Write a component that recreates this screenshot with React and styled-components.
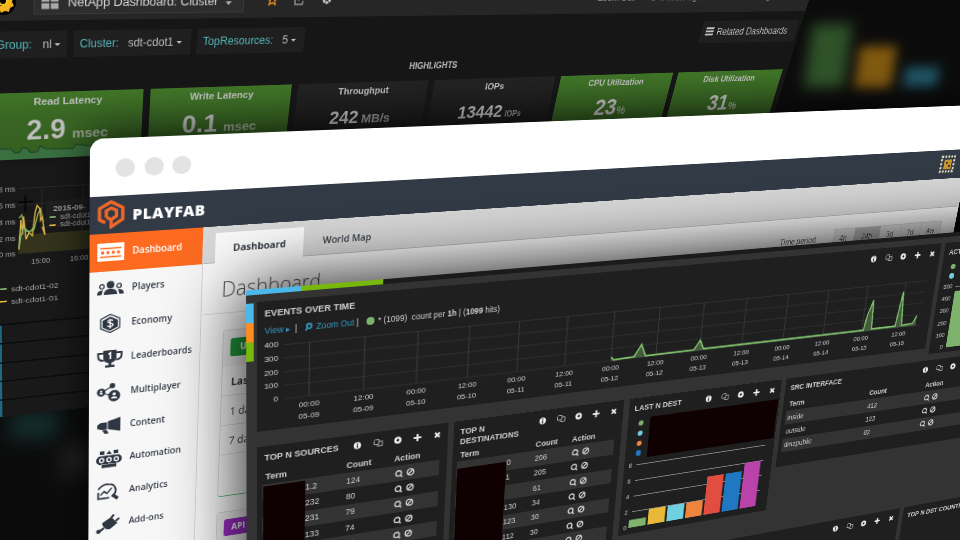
import React from "react";
import styled, { createGlobalStyle, css } from "styled-components";

/* Each window is a flat page hung in perspective: an origin on the desktop,
   the vanishing points of its rows and columns, and the foreshortening rate. */
const plane = ({ origin, rows, cols, a, b, dx, dy }) => css`
  transform-origin: 0 0;
  transform: matrix3d(
      ${rows[0] * a}, ${rows[1] * a}, 0, ${a},
      ${cols[0] * b}, ${cols[1] * b}, 0, ${b},
      0, 0, 1, 0,
      ${origin[0]}, ${origin[1]}, 0, 1
    )
    translate(${dx}px, ${dy}px);
`;

const Global = createGlobalStyle`
  * { box-sizing: border-box; }
  html, body { margin: 0; background: #0b0b0b; }
`;

const Desktop = styled.main`
  position: relative;
  width: 960px;
  height: 540px;
  overflow: hidden;
  background: #0b0b0b;
  font-family: "Liberation Sans", sans-serif;
`;

const Glow = styled.div`
  position: absolute;
  left: ${(p) => p.$x}px;
  top: ${(p) => p.$y}px;
  width: ${(p) => p.$w}px;
  height: ${(p) => p.$h}px;
  background: ${(p) => p.$c};
  filter: blur(${(p) => p.$blur || 6}px);
  transform: skewX(-8deg);
`;

/* ---------- metrics dashboard (back) ---------- */

const MetricsWindow = styled.section`
  position: absolute;
  left: 0;
  top: 0;
  width: 1048px;
  height: 522px;
  overflow: hidden;
  background: #161616;
  color: #bdbdbd;
  ${plane({ origin: [0, 0], rows: [3850, -26], cols: [20, 2560], a: 1 / 3850, b: 1 / 2560, dx: -21, dy: -24 })}
`;

const MetricsNav = styled.header`
  display: flex;
  align-items: center;
  height: 45px;
  padding: 6px 20px 0 11px;
  background: #262626;
  font-size: 13.6px;
`;

const DashPicker = styled.div`
  display: flex;
  align-items: center;
  gap: 9px;
  width: 227px;
  height: 27px;
  margin: 0 26px 0 18px;
  padding: 2px 0 0 7px;
  background: #2d2d2d;
  border: 1px solid #3a3a3a;
  color: #d2d2d2;
  letter-spacing: -0.15px;
  white-space: nowrap;
`;

const NavIcons = styled.div`
  display: flex;
  gap: 19px;
  flex: 1;
`;

const NavText = styled.span`
  display: flex;
  align-items: center;
  gap: 5px;
  margin-left: ${(p) => p.$gap || 0}px;
  font-size: 11.5px;
  color: #999;
  white-space: nowrap;
`;

const Variables = styled.div`
  display: flex;
  gap: 6.5px;
  height: 39px;
  padding: 10.5px 5px 0 10px;
`;

const Variable = styled.div`
  display: flex;
  align-items: center;
  justify-content: ${(p) => (p.$end ? "flex-end" : "flex-start")};
  gap: ${(p) => p.$gap || 10}px;
  width: ${(p) => p.$w}px;
  padding: 0 7px;
  margin-left: ${(p) => (p.$push ? "auto" : 0)};
  background: #1f1f1f;
  font-size: 12.2px;
  white-space: nowrap;
  b {
    font-weight: 400;
    color: #55b8bd;
  }
  i {
    display: inline-block;
    margin: 0 0 2px 3px;
    border: 3px solid transparent;
    border-top-color: #c3c3c3;
    border-bottom: 0;
  }
`;

const Highlights = styled.h2`
  margin: 0;
  height: 36.5px;
  line-height: 39px;
  font-size: 10.2px;
  text-align: center;
`;

const StatRow = styled.div`
  display: grid;
  grid-template-columns: repeat(6, 165px);
  gap: 8px;
  padding-left: 10px;
`;

const Stat = styled.div`
  display: flex;
  flex-direction: column;
  align-items: center;
  height: 74px;
  padding-top: 4px;
  background: ${(p) => (p.$green ? "linear-gradient(#3f7427, #386523 40%, #345f20)" : "linear-gradient(#222, #161616)")};
  font-weight: 700;
  overflow: hidden;
`;

const StatTitle = styled.div`
  font-size: 11.4px;
  line-height: 13px;
`;

const StatValue = styled.div`
  margin-top: 9px;
  height: 31px;
  line-height: 31px;
  font-size: ${(p) => p.$size}px;
  white-space: nowrap;
  small {
    margin-left: ${(p) => p.$space || 4}px;
    font-size: ${(p) => p.$unit}px;
    opacity: 0.75;
  }
`;

const GraphPanel = styled.div`
  display: grid;
  grid-template-columns: 26px 1fr;
  width: 400px;
  height: 195px;
  margin: 5px 0 0 10px;
  padding-top: 20px;
  background: #181818;
  color: #a4a4a4;
  font-size: 8.5px;
`;

const Axis = styled.div`
  display: flex;
  flex-direction: column;
  text-align: right;
  line-height: 19.7px;
`;

const Plot = styled.div`
  position: relative;
  padding: 8px 0 0 3px;
  svg {
    display: block;
  }
`;

const Hours = styled.div`
  display: flex;
  gap: 23px;
  padding: 1px 0 0 15px;
`;

const Legend = styled.div`
  display: flex;
  flex-direction: column;
  gap: 5px;
  margin: 22px 0 0 -27px;
  font-size: 9.8px;
`;

const Series = styled.div`
  display: flex;
  align-items: center;
  gap: 5px;
  white-space: nowrap;
  &::before {
    content: "";
    width: ${(p) => p.$dash || 14}px;
    height: 2px;
    background: ${(p) => p.$c};
  }
`;

const Tooltip = styled.div`
  position: absolute;
  left: 34px;
  top: 25px;
  width: 110px;
  height: 33px;
  padding: 4px 0 0 4px;
  background: rgba(32, 32, 32, 0.85);
  line-height: 9.8px;
  b {
    display: block;
    padding-left: 4px;
    font-size: 9.2px;
    line-height: 12px;
  }
`;

const DarkRow = styled.div`
  width: 400px;
  height: 25.6px;
  margin-left: 10px;
  border-top: 2px solid #0b0b0b;
  border-left: 10px solid #1f6a80;
  background: #191919;
`;

function Metrics() {
  return (
    <MetricsWindow>
      <MetricsNav>
        <svg width="26" height="26" viewBox="0 0 26 26">
          <circle cx="13" cy="13" r="13" fill="#000" />
          <path d="M4 16l2 5 3-1 2 4 4-2 4 1 1-4 4-2-2-4 1-4-3-1-3 2-2 6-5 1-4-3z" fill="#f2b51d" />
          <circle cx="13" cy="12" r="4" fill="none" stroke="#f2c51d" strokeWidth="2" />
        </svg>
        <DashPicker>
          <svg width="18" height="14" viewBox="0 0 18 14" fill="#aaa">
            <path d="M0 0h8v6H0zM9.500 0h8v6h-8zM0 7.500h8v6H0zM9.500 7.500h8v6h-8z" />
          </svg>
          NetApp Dashboard: Cluster
          <svg width="7" height="14" viewBox="0 0 7 14" fill="#aaa"><path d="M0 7h7l-3.500 4z" /></svg>
        </DashPicker>
        <NavIcons>
          <svg width="13" height="13" viewBox="0 0 13 13"><path d="M6.500 1l1.600 3.700 4 .4-3 2.700.9 4-3.500-2-3.500 2 .9-4-3-2.700 4-.4z" fill="none" stroke="#e08a1d" strokeWidth="1.600" /></svg>
          <svg width="13" height="13" viewBox="0 0 13 13" fill="none" stroke="#999" strokeWidth="1.400"><path d="M6 3H1v9h9V8M5 8c0-4 3-5 7-5" /></svg>
          <svg width="13" height="13" viewBox="0 0 13 13"><circle cx="6.500" cy="6.500" r="3.700" fill="none" stroke="#ccc" strokeWidth="3" strokeDasharray="3 0.8" /></svg>
        </NavIcons>
        <NavText>Zoom Out</NavText>
        <NavText $gap={24}>
          <svg width="9" height="9" viewBox="0 0 9 9"><circle cx="4.500" cy="4.500" r="4.200" fill="#bbb" /></svg>
          6 hours ago to a few seconds ago
        </NavText>
        <NavText $gap={26}>
          <svg width="10" height="10" viewBox="0 0 10 10"><circle cx="5" cy="5" r="3.600" fill="none" stroke="#aaa" strokeWidth="1.600" /></svg>
        </NavText>
      </MetricsNav>
      <Variables>
        <Variable $w={80} $end $gap={11}><b>Group:</b><span>nl<i /></span></Variable>
        <Variable $w={128.5}><b>Cluster:</b><span>sdt-cdot1<i /></span></Variable>
        <Variable $w={125} $gap={11}><b>TopResources:</b><span>5<i /></span></Variable>
        <Variable $w={150} $push $gap={5}>
          <svg width="12" height="11" viewBox="0 0 12 11" fill="#c3c3c3"><path d="M0 0h12v2.300H0zM0 4h12v2.300H0zM0 8h12v2.300H0z" /></svg>
          Related Dashboards
        </Variable>
      </Variables>
      <Highlights>HIGHLIGHTS</Highlights>
      <StatRow>
        <Stat $green>
          <StatTitle>Read Latency</StatTitle>
          <StatValue $size={30.5} $unit={15.5} $space={7}>2.9<small>msec</small></StatValue>
          <svg width="165" height="18" viewBox="0 0 165 18">
            <path d="M0 4l18 1 4 5h5l4-6 5 1 4 5h8l3-7 8 4 30 1 4-5 20 3 52-1v13H0z" fill="#3a7040" />
            <path d="M0 4l18 1 4 5h5l4-6 5 1 4 5h8l3-7 8 4 30 1 4-5 20 3 52-1" fill="none" stroke="#1f4a28" strokeWidth="1.500" />
          </svg>
        </Stat>
        <Stat $green><StatTitle>Write Latency</StatTitle><StatValue $size={30} $unit={15.5} $space={7}>0.1<small>msec</small></StatValue></Stat>
        <Stat><StatTitle>Throughput</StatTitle><StatValue $size={22} $unit={15.500}>242<small>MB/s</small></StatValue></Stat>
        <Stat><StatTitle>IOPs</StatTitle><StatValue $size={22} $unit={10} $space={4}>13442<small>IOPs</small></StatValue></Stat>
        <Stat $green><StatTitle>CPU Utilization</StatTitle><StatValue $size={29.5} $unit={15} $space={1}>23<small>%</small></StatValue></Stat>
        <Stat $green><StatTitle>Disk Utilization</StatTitle><StatValue $size={29.5} $unit={15} $space={1}>31<small>%</small></StatValue></Stat>
      </StatRow>
      <GraphPanel>
        <Axis><span>8 ms</span><span>6 ms</span><span>4 ms</span><span>2 ms</span><span>0 ms</span></Axis>
        <Plot>
          <svg width="360" height="84" viewBox="0 0 360 84">
            <path d="M0 .5h360M0 20h360M0 40h360M0 60h360M0 79h360M26 0v79M72 0v79" stroke="#2b2b2b" fill="none" />
            <path d="M0 56h90v23H0z" fill="#34331b" />
            <path d="M1 36l3-4 3 16 5 5 6-3 4-18 3-6 3 16" fill="none" stroke="#88a04b" strokeWidth="1.500" />
            <path d="M1 74l2-36 2 18 1-22 3 28 3-8 4 4 3-28 2-8 3 4 1 14 2-4 3 22-3-10" fill="none" stroke="#d8b54a" strokeWidth="1.500" />
            <path d="M1 72l2-14 3-10 3 4 5 1 3-5" fill="none" stroke="#7eb26d" strokeWidth="1.500" />
            <path d="M8 9v20M0 17h17" stroke="#000" strokeWidth="1.500" />
          </svg>
          <Tooltip>
            <b>2015-09-</b>
            <Series $c="#7eb26d" $dash={7}>sdt-cdot1-02</Series>
            <Series $c="#eab839" $dash={7}>sdt-cdot1-01</Series>
          </Tooltip>
          <Hours><span>15:00</span><span>16:00</span></Hours>
          <Legend><Series $c="#7eb26d">sdt-cdot1-02</Series><Series $c="#eab839">sdt-cdot1-01</Series></Legend>
        </Plot>
      </GraphPanel>
      {[0, 1, 2, 3, 4].map((n) => <DarkRow key={n} />)}
    </MetricsWindow>
  );
}

/* ---------- game back office (middle) ---------- */

const OfficeWindow = styled.section`
  position: absolute;
  left: 0;
  top: 0;
  width: 1190px;
  height: 620px;
  overflow: visible;
  border-radius: 14px 14px 0 0;
  background: #fafafa;
  box-shadow: 0 0 44px rgba(0, 0, 0, 0.85);
  color: #343a42;
  font-family: "Open Sans", sans-serif;
  ${plane({ origin: [90, 139], rows: [3607, 4], cols: [72, 4600], a: 1 / 3517, b: 1 / 4461, dx: 0, dy: 0 })}
`;

const TitleBar = styled.div`
  display: flex;
  align-items: center;
  gap: 9.5px;
  height: 58.5px;
  padding: 3px 0 0 26px;
  border-radius: 14px 14px 0 0;
  background: #fff;
`;

const Light = styled.span`
  width: 20px;
  height: 19px;
  border-radius: 50%;
  background: #e3e3e3;
`;

const OfficeNav = styled.header`
  display: flex;
  align-items: center;
  gap: 7px;
  height: 39.5px;
  padding: 0 23px 0 7px;
  background: #313a45;
  color: #fff;
  font-size: 16.5px;
  font-weight: 800;
  letter-spacing: 0.4px;
  svg:last-child {
    margin-left: auto;
  }
`;

const OfficeBody = styled.div`
  display: grid;
  grid-template-columns: 121px 1fr;
  height: 522px;
`;

const Sidebar = styled.nav`
  background: #f7f7f7;
  border-right: 1px solid #d6d6d6;
`;

const SideItem = styled.div`
  display: grid;
  grid-template-columns: 30px 1fr;
  align-items: center;
  gap: 7.5px;
  height: ${(p) => (p.$active ? 39.5 : 38.3)}px;
  padding-left: 7px;
  background: ${(p) => (p.$active ? "#fd6a20" : "transparent")};
  color: ${(p) => (p.$active ? "#fff" : "#333a44")};
  font-size: 10px;
  font-weight: 600;
  span {
    padding-bottom: 1.500px;
  }
`;

const Tabs = styled.div`
  display: flex;
  align-items: flex-end;
  height: 39.5px;
  padding-left: 13px;
  background: #d8d8d8;
  border-bottom: 1px solid #bbb;
  font-size: 11px;
  font-weight: 600;
`;

const Tab = styled.div`
  display: flex;
  align-items: center;
  justify-content: center;
  width: ${(p) => (p.$active ? 99.5 : 104)}px;
  height: 33px;
  margin-bottom: -1px;
  padding-bottom: ${(p) => (p.$active ? 0 : 1)}px;
  background: ${(p) => (p.$active ? "#fafafa" : "transparent")};
  font-weight: ${(p) => (p.$active ? 700 : 600)};
`;

const PageHead = styled.div`
  display: flex;
  align-items: center;
  height: 57px;
  padding: 2px 25px 0 21.500px;
  border-bottom: 1px solid #ddd;
  h1 {
    margin: 0 auto 0 0;
    color: #4a4a4a;
    font-size: 23px;
    font-weight: 300;
  }
`;

const Period = styled.div`
  display: flex;
  align-items: center;
  padding-top: 3px;
  font-size: 10.5px;
  > span {
    margin-right: 28px;
  }
`;

const PeriodButton = styled.div`
  width: ${(p) => (p.$on ? 44 : 35.7)}px;
  height: 24px;
  line-height: 24px;
  text-align: center;
  background: ${(p) => (p.$on ? "#bdbdbd" : "#e6e6e6")};
  border: 1px solid #d2d2d2;
  border-left-width: 0;
`;

const Card = styled.div`
  width: 500px;
  height: ${(p) => p.$h}px;
  margin: 19px 0 0 25px;
  border: 1px solid #d9d9d9;
  border-bottom-color: #58b668;
  border-radius: 4px;
  background: #fbfbfb;
`;

const CardHead = styled.div`
  height: 41px;
  padding: 9px 0 0 8px;
  background: #f1f1f1;
`;

const Tag = styled.div`
  width: ${(p) => p.$w}px;
  height: 21px;
  padding-left: ${(p) => p.$pad}px;
  border-radius: 3px;
  background: ${(p) => p.$c};
  color: #fff;
  font-size: 10px;
  font-weight: 700;
  line-height: 20px;
`;

const CardRow = styled.div`
  height: 35px;
  padding-left: 10px;
  border-bottom: 1px solid #dcdcdc;
  font-size: 12px;
  font-weight: ${(p) => (p.$bold ? 700 : 500)};
  line-height: 37px;
`;

const ico = { fill: "#2f3742", stroke: "none" };
const ICONS = {
  Dashboard: (
    <>
      <path d="M1 1h28v19H1z" fill="#fff" />
      <path d="M4 6.500h22M4 15.500h22" stroke="#fd6a20" strokeWidth="1.500" />
      <path d="M5 11h20" stroke="#fd6a20" strokeWidth="3" strokeDasharray="3 2.500" />
    </>
  ),
  Players: (
    <g {...ico}>
      <circle cx="15" cy="6.500" r="4" />
      <path d="M8 17c0-5 3-6 7-6s7 1 7 6z" />
      <circle cx="6" cy="8" r="2.300" fill="none" stroke="#2f3742" strokeWidth="1.300" />
      <circle cx="24" cy="8" r="2.300" fill="none" stroke="#2f3742" strokeWidth="1.300" />
      <path d="M1 17c0-4 2-5 6-5l-1.500 5zM29 17c0-4-2-5-6-5l1.500 5z" />
    </g>
  ),
  Economy: (
    <g {...ico}>
      <path d="M15 .5l10 5v10l-10 5-10-5v-10z" fill="none" stroke="#2f3742" strokeWidth="1.300" />
      <path d="M15 3l8 4v7.500L15 18.500 7 14.500V7z" />
      <path d="M18 7.500c-2-1.500-5.500-1-5.500.8 0 2.500 5.500 1.200 5.500 3.800 0 2-4 2.200-6 .6M15 5.500v10.500" fill="none" stroke="#fff" strokeWidth="1.300" />
    </g>
  ),
  Leaderboards: (
    <g {...ico}>
      <path d="M8 1h14v8c0 4-3 6-7 6s-7-2-7-6zM13.500 14h3v4h-3zM10 17.500h10v2.500H10z" />
      <path d="M8 4H2.500v3c0 3 2 5 6 5M22 4h5.500v3c0 3-2 5-6 5" fill="none" stroke="#2f3742" strokeWidth="2" />
      <path d="M13.500 5.500L15.500 4v7" fill="none" stroke="#fff" strokeWidth="1.700" />
    </g>
  ),
  Multiplayer: (
    <g {...ico}>
      <path d="M6 10l12-7M6 10l14 5" stroke="#2f3742" strokeWidth="1.300" />
      <circle cx="6" cy="9.500" r="4.500" />
      <circle cx="18" cy="3" r="3" />
      <circle cx="20" cy="14.500" r="6.500" />
      <circle cx="20" cy="12.500" r="1.800" fill="#fff" />
      <path d="M16.500 17.500c0-3 7-3 7 0z" fill="#fff" />
      <circle cx="6" cy="8.500" r="1.200" fill="#fff" />
      <path d="M4 11.500c0-2 4-2 4 0z" fill="#fff" />
    </g>
  ),
  Content: (
    <g {...ico}>
      <path d="M13.500 5L27 1.500v16L13.500 14zM2 8.500L6 6h6.500v8H6l-4-1.500zM7 14.500h5l2.500 4.500H10z" />
    </g>
  ),
  Automation: (
    <g {...ico}>
      <path d="M5 0h5v4H5zM15 0l3 4h-6zM20 0h5v4h-5z" />
      <rect x="1" y="5.500" width="28" height="10" rx="5" />
      <path d="M7 16h16v3.500H7z" />
      <g fill="none" stroke="#fff" strokeWidth="1.500">
        <circle cx="7" cy="10.500" r="2.300" />
        <circle cx="15" cy="10.500" r="2.300" />
        <circle cx="23" cy="10.500" r="2.300" />
      </g>
    </g>
  ),
  Analytics: (
    <g fill="none" stroke="#2f3742">
      <path d="M3.500 6.500C8-.5 21-.5 22.500 7.500c.8 4-1 7-4 8.500M3.500 10v7.500h12" strokeWidth="2" />
      <path d="M6 13.500l4-4 3 2.500 5.500-6" strokeWidth="1.700" />
      <path d="M19 14.500l6 5" strokeWidth="3.600" />
    </g>
  ),
  "Add-ons": (
    <g {...ico}>
      <path d="M8 9l10-6 7 8-8 6c-4 1.500-8-2-9-8z" />
      <path d="M18 4l3-3.500M23 8.500l4-3M10 15l-6 4.500" stroke="#2f3742" strokeWidth="2.400" />
      <circle cx="4" cy="18.500" r="2.500" />
    </g>
  ),
};

function Office() {
  return (
    <OfficeWindow>
      <TitleBar><Light /><Light /><Light /></TitleBar>
      <OfficeNav>
        <svg width="30" height="30" viewBox="0 0 30 30" fill="none" stroke="#f1672a" strokeWidth="3.400">
          <path d="M9 23.500L3 20V8.500L15 2l12 6.500v12L15 28v-7.500M10 18v-7l5-2.700 5.500 2.700v6L15 20.500 10.500 18" />
        </svg>
        PLAYFAB
        <svg width="26" height="24" viewBox="0 0 26 24">
          <path d="M2 2h22v20H2z" fill="none" stroke="#efe4c8" strokeWidth="3.200" strokeDasharray="3 2.200" />
          <path d="M7 6h13v13H7z" fill="#c9962e" />
          <path d="M10 9h3v3h-3zM15 13h3v3h-3z" fill="#313a45" />
        </svg>
      </OfficeNav>
      <OfficeBody>
        <Sidebar>
          {Object.keys(ICONS).map((name, n) => (
            <SideItem key={name} $active={n === 0}>
              <svg width="30" height="21" viewBox="0 0 30 21">{ICONS[name]}</svg>
              <span>{name}</span>
            </SideItem>
          ))}
        </Sidebar>
        <div>
          <Tabs><Tab $active>Dashboard</Tab><Tab>World Map</Tab></Tabs>
          <PageHead>
            <h1>Dashboard</h1>
            <Period>
              <span>Time period</span>
              {["4h", "24h", "3d", "7d", "4w"].map((t) => <PeriodButton key={t} $on={t === "24h"}>{t}</PeriodButton>)}
            </Period>
          </PageHead>
          <Card $h={198}>
            <CardHead><Tag $c="#1f9d3c" $w={90} $pad={11}>US</Tag></CardHead>
            <CardRow $bold>Last</CardRow>
            <CardRow>1 day</CardRow>
            <CardRow>7 days</CardRow>
          </Card>
          <Card $h={150}>
            <CardHead><Tag $c="#9a2fc4" $w={60} $pad={9}>API</Tag></CardHead>
          </Card>
        </div>
      </OfficeBody>
    </OfficeWindow>
  );
}

/* ---------- event console (front) ---------- */

const ConsoleWindow = styled.section`
  position: absolute;
  left: 0;
  top: 0;
  width: 1060px;
  height: 520px;
  overflow: visible;
  background: #333;
  box-shadow: 0 0 64px 2px rgba(0, 0, 0, 0.92);
  color: #d0d0d0;
  ${plane({ origin: [257, 302], rows: [3575, 17], cols: [257, 4600], a: 1 / 3042, b: 1 / 4168, dx: -10, dy: -12 })}
`;

const TopStrip = styled.div`
  height: 5px;
  background: linear-gradient(90deg, #4bb8ea 51px, #78b80c 51px 130px, #1b1b1b 130px);
`;

const ConsoleBody = styled.div`
  display: grid;
  grid-template-columns: 7px 1fr;
  gap: 3px;
`;

const SideStrip = styled.div`
  height: 57px;
  margin-top: 8px;
  background: linear-gradient(#4bb8ea 19px, #ff8d1e 19px 38px, #78b80c 38px);
`;

const Grid = styled.div`
  display: grid;
  grid-template-rows: 140.2px 187.7px 140px;
  gap: 6.3px;
  padding-top: 7px;
`;

const PanelRow = styled.div`
  display: grid;
  grid-template-columns: ${(p) => p.$cols};
  gap: 6.3px;
  align-items: start;
`;

const Panel = styled.article`
  position: relative;
  height: ${(p) => p.$h}px;
  overflow: hidden;
  background: #1f1f1f;
`;

const PanelHead = styled.div`
  display: flex;
  justify-content: space-between;
  align-items: flex-start;
  min-height: 23px;
  padding: 6.5px 5px 0 7px;
`;

const PanelTitle = styled.h3`
  margin: 0;
  max-width: ${(p) => (p.$narrow ? "70px" : "none")};
  font-size: 8.8px;
  line-height: 11px;
  white-space: ${(p) => (p.$narrow ? "normal" : "nowrap")};
`;

const Tools = styled.svg.attrs({ width: 94, height: 10, viewBox: "0 0 94 10" })`
  flex: none;
`;

function PanelTools() {
  return (
    <Tools>
      <circle cx="4.500" cy="5" r="3.700" fill="#eee" />
      <path d="M4.500 4.400v3M4.500 2.400v1.300" stroke="#222" strokeWidth="1.300" />
      <g fill="none" stroke="#a8a8a8" strokeWidth="1">
        <path d="M22.500 1.500h4v5h-5v-4zM26.500 3.500h3.500v5h-5v-2" />
      </g>
      <circle cx="46" cy="5" r="2.600" fill="none" stroke="#eee" strokeWidth="2.400" />
      <path d="M66.500 1v8M62.500 5h8" stroke="#eee" strokeWidth="2" />
      <path d="M85 2.500l5 5M90 2.500l-5 5" stroke="#eee" strokeWidth="2" />
    </Tools>
  );
}

const Query = styled.div`
  display: flex;
  align-items: center;
  height: 12px;
  padding-left: 7px;
  font-size: 8.25px;
  white-space: pre;
  em {
    color: #3298c4;
    font-style: normal;
  }
  svg {
    margin: 0 3px 0 7px;
  }
`;

const Chart = styled.div`
  display: grid;
  grid-template-columns: 20px 1fr;
  gap: 5px;
  margin-top: 2px;
`;

const Scale = styled.div`
  display: flex;
  flex-direction: column;
  text-align: right;
  font-size: ${(p) => p.$size || 8}px;
  line-height: ${(p) => p.$step}px;
`;

const PlotArea = styled.div`
  padding-top: ${(p) => p.$top}px;
  svg {
    display: block;
  }
`;

const Ticks = styled.div`
  display: grid;
  grid-template-columns: repeat(14, 53.7px);
  margin: 2px 0 0 -2px;
  text-align: center;
  font-size: 8px;
  line-height: 12px;
`;

const Table = styled.div`
  font-size: 8.5px;
`;

const TableRow = styled.div`
  display: grid;
  grid-template-columns: ${(p) => p.$cols};
  align-items: center;
  height: ${(p) => (p.$head ? 16.5 : 17.3)}px;
  margin: 0 8px 0 5px;
  padding-left: 3px;
  background: ${(p) => (p.$odd ? "#333" : "transparent")};
  font-weight: ${(p) => (p.$head ? 700 : 400)};
  ${(p) => p.$head && "padding-top: 1px; font-size: 8.8px;"}
`;

const Indent = styled.span`
  padding-left: ${(p) => p.$by}px;
`;

const Redacted = styled.div`
  position: absolute;
  left: ${(p) => p.$x}px;
  top: ${(p) => p.$y}px;
  width: ${(p) => p.$w}px;
  height: ${(p) => p.$h}px;
  background: #0f0101;
`;

const Bullet = styled.i`
  display: block;
  width: ${(p) => p.$d || 6.5}px;
  height: ${(p) => p.$d || 6.5}px;
  border-radius: 50%;
  background: ${(p) => p.$c};
`;

const Bullets = styled.div`
  display: grid;
  gap: 5.3px;
  padding: 3.500px 0 0 13px;
`;

const BarChart = styled.div`
  display: grid;
  grid-template-columns: 10px 1fr;
  gap: 2px;
  margin-top: 1.500px;
`;

function RowActions() {
  return (
    <svg width="24" height="10" viewBox="0 0 24 10" fill="none" stroke="#d4d4d4" strokeWidth="1.400">
      <circle cx="5" cy="4.700" r="2.900" />
      <path d="M7 7l2 2" />
      <circle cx="17.500" cy="4.700" r="3.300" />
      <path d="M15.300 7l4.400-4.600" />
    </svg>
  );
}

function TermTable({ cols, rows, indent }) {
  return (
    <Table>
      <TableRow $head $cols={cols}><span>Term</span><span>Count</span><span>Action</span></TableRow>
      {rows.map(([term, count], n) => (
        <TableRow key={n} $cols={cols} $odd={n % 2 === 0}>
          <Indent $by={indent || 0}>{term}</Indent>
          <span>{count}</span>
          <RowActions />
        </TableRow>
      ))}
    </Table>
  );
}

const DAYS = ["05-09", "05-09", "05-10", "05-10", "05-11", "05-11", "05-12", "05-12", "05-13", "05-13", "05-14", "05-14", "05-15", "05-15"];
const EVENTS = "M347 51l3 3.500 24-1 8-13 6 13.500 59-.5 7-10.500 5 10.500h212l3-18 6-17.500 2.500 35h33.500l5-42 4.500 42 15.500-1 5-9";
const BARS = [
  [1, "#7eb26d"], [2, "#eab839"], [2, "#6ed0e0"], [2, "#ef843c"],
  [5, "#e24d42"], [5, "#1f78c1"], [6, "#ba43a9"],
];

function Console() {
  return (
    <ConsoleWindow>
      <TopStrip />
      <ConsoleBody>
        <SideStrip />
        <Grid>
          <PanelRow $cols="791px 193px">
            <Panel $h={130}>
              <PanelHead><PanelTitle>EVENTS OVER TIME</PanelTitle><PanelTools /></PanelHead>
              <Query>
                <em>View ▸</em>{"  |"}
                <svg width="8" height="8" viewBox="0 0 8 8" fill="none" stroke="#3298c4" strokeWidth="1.600"><circle cx="4" cy="3.200" r="2.300" /><path d="M2.500 5L.5 7.500" /></svg>
                <em>Zoom Out</em>{" |"}
                <svg width="9" height="8" viewBox="0 0 9 8"><circle cx="4.500" cy="4" r="4" fill="#7eb26d" /></svg>
                {"* (1099)  count per "}<b>1h</b>{" | ("}<b>1099</b>{" hits)"}
              </Query>
              <Chart>
                <Scale $step={13.8}><span>400</span><span>300</span><span>200</span><span>100</span><span>0</span></Scale>
                <PlotArea $top={6.8}>
                  <svg width="753" height="56" viewBox="0 0 753 56">
                    <path d="M0 .5h753M0 14h753M0 27.700h753M0 41.400h753M0 55h753" stroke="#303030" fill="none" />
                    <path d={DAYS.map((_, n) => `M${24.6 + 53.7 * n} 0v55`).join("")} stroke="#3c3c3c" fill="none" />
                    <path d={`${EVENTS}V55H347z`} fill="#7eb26d" fillOpacity="0.4" />
                    <path d={EVENTS} fill="none" stroke="#7fc06a" strokeWidth="1.800" />
                  </svg>
                  <Ticks>{DAYS.map((d, n) => <div key={n}>{n % 2 ? "12:00" : "00:00"}<br />{d}</div>)}</Ticks>
                </PlotArea>
              </Chart>
            </Panel>
            <Panel $h={138}>
              <PanelHead><PanelTitle>ACTIONS</PanelTitle></PanelHead>
              <Bullets><Bullet $c="#7eb26d" /><Bullet $c="#6ed0e0" /></Bullets>
              <Chart>
                <Scale $step={15.3}><span>500</span><span>400</span><span>300</span><span>200</span><span>100</span><span>0</span></Scale>
                <PlotArea $top={8}>
                  <svg width="160" height="78" viewBox="0 0 160 78">
                    <path d="M0 .5h160" stroke="#888" />
                    <path d="M0 6h140v71H0z" fill="#7eb26d" />
                  </svg>
                </PlotArea>
              </Chart>
            </Panel>
          </PanelRow>
          <PanelRow $cols="193px 193px 193px 293px">
            <Panel $h={187}>
              <PanelHead><PanelTitle>TOP N SOURCES</PanelTitle><PanelTools /></PanelHead>
              <TermTable
                cols="80px 49px 1fr"
                indent={39}
                rows={[["1.2", 124], ["232", 80], ["231", 79], ["133", 74], ["120", 72], ["118", 70]]}
              />
              <Redacted $x={6} $y={41.5} $w={41} $h={160} />
            </Panel>
            <Panel $h={187}>
              <PanelHead><PanelTitle $narrow>TOP N DESTINATIONS</PanelTitle><PanelTools /></PanelHead>
              <TermTable
                cols="84px 42px 1fr"
                indent={52}
                rows={[["0", 206], ["1", 205], ["", 61], ["130", 34], ["123", 30], ["112", 30], ["109", 28]]}
              />
              <Redacted $x={6} $y={52.5} $w={54} $h={150} />
            </Panel>
            <Panel $h={164}>
              <PanelHead><PanelTitle>LAST N DEST</PanelTitle><PanelTools /></PanelHead>
              <Bullets>{["#7eb26d", "#6ed0e0", "#ef843c", "#1f78c1"].map((c) => <Bullet key={c} $c={c} />)}</Bullets>
              <Redacted $x={27} $y={23.5} $w={164} $h={48} />
              <BarChart>
                <Scale $step={19} $size={7}><span>8</span><span>6</span><span>4</span><span>2</span><span>0</span></Scale>
                <PlotArea $top={9}>
                  <svg width="172" height="78" viewBox="0 0 172 78">
                    <path d="M3 .5h166M3 19.500h166M3 38.500h166M3 57.500h166" stroke="#8c8c8c" fill="none" />
                    {BARS.map(([v, c], n) => <rect key={n} x={24 * n} y={77 - v * 9.6} width="21.500" height={v * 9.6} fill={c} />)}
                  </svg>
                </PlotArea>
              </BarChart>
            </Panel>
            <Panel $h={110}>
              <PanelHead><PanelTitle>SRC INTERFACE</PanelTitle><PanelTools /></PanelHead>
              <TermTable cols="112px 82px 1fr" rows={[["inside", 412], ["outside", 123], ["dmzpublic", 82]]} />
            </Panel>
          </PanelRow>
          <PanelRow $cols="791px 193px">
            <Panel $h={140}>
              <PanelHead><PanelTitle>EVENTS</PanelTitle><PanelTools /></PanelHead>
            </Panel>
            <Panel $h={140}>
              <PanelHead><PanelTitle>TOP N DST COUNTRY</PanelTitle></PanelHead>
            </Panel>
          </PanelRow>
        </Grid>
      </ConsoleBody>
    </ConsoleWindow>
  );
}

export default function App() {
  return (
    <>
      <Global />
      <Desktop>
        <Glow $x={808} $y={24} $w={40} $h={64} $c="#2f5229" $blur={7} />
        <Glow $x={857} $y={46} $w={37} $h={42} $c="#80590f" />
        <Glow $x={904} $y={67} $w={34} $h={20} $c="#1f5666" />
        <Glow $x={10} $y={412} $w={48} $h={26} $c="#14302f" $blur={10} />
        <Glow $x={62} $y={445} $w={26} $h={30} $c="#242424" $blur={10} />
        <Metrics />
        <Office />
        <Console />
      </Desktop>
    </>
  );
}
